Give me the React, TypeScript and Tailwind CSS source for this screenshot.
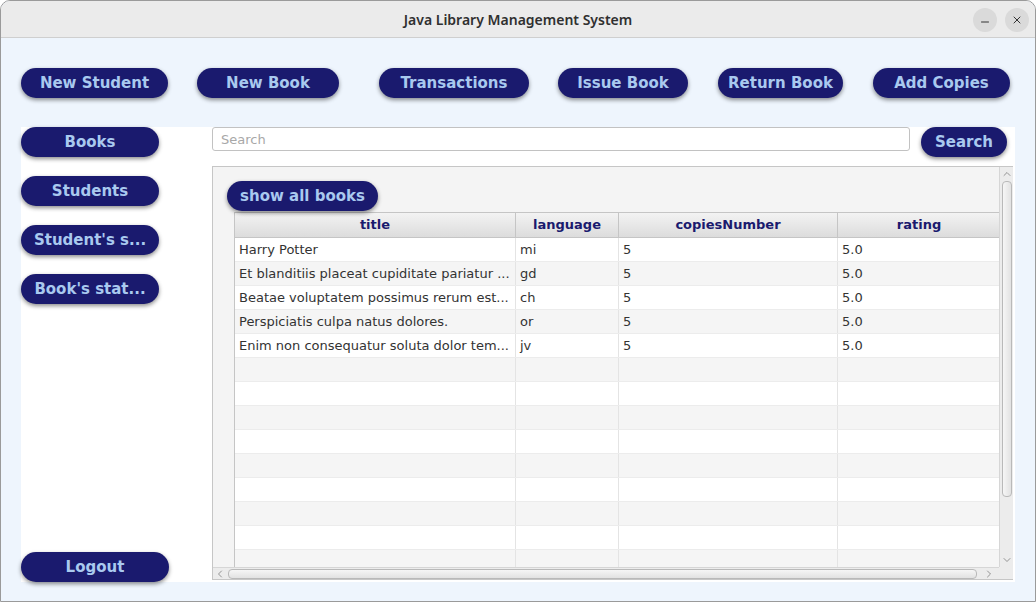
import { ChevronDown, ChevronLeft, ChevronRight, ChevronUp, Minus, X } from "lucide-react";

const books = [
  { title: "Harry Potter", language: "mi", copies: "5", rating: "5.0" },
  { title: "Et blanditiis placeat cupiditate pariatur ...", language: "gd", copies: "5", rating: "5.0" },
  { title: "Beatae voluptatem possimus rerum est...", language: "ch", copies: "5", rating: "5.0" },
  { title: "Perspiciatis culpa natus dolores.", language: "or", copies: "5", rating: "5.0" },
  { title: "Enim non consequatur soluta dolor tem...", language: "jv", copies: "5", rating: "5.0" },
];

const fx = "font-['DejaVu_Sans',sans-serif]";

function FxButton({ label, className = "" }: { label: string; className?: string }) {
  return (
    <button
      className={`h-[30px] shrink-0 rounded-full bg-[#1a1a6e] text-[15px] font-bold text-[#a9c9ef] shadow-[0_2px_4px_rgba(0,0,0,0.45)] ${fx} ${className}`}
    >
      {label}
    </button>
  );
}

export default function App() {
  const rows = Array.from({ length: 14 }, (_, i) => books[i]);

  return (
    <div className="w-[1036px] h-[602px] flex flex-col overflow-hidden rounded-t-[10px] border border-[#9a9a9a] bg-[#eef5fd]">
      {/* Title bar */}
      <div className="relative h-[37px] shrink-0 flex items-center justify-center bg-[#ebebeb] border-b border-[#cfcfcf]">
        <span className="text-[14px] font-semibold text-[#303030] font-['Noto_Sans',sans-serif]">
          Java Library Management System
        </span>
        <div className="absolute right-[6px] top-[7px] flex gap-[8px]">
          <div className="w-[24px] h-[24px] rounded-full bg-[#dadada] flex items-center justify-center">
            <Minus size={12} strokeWidth={2} className="text-[#333] mt-[4px]" />
          </div>
          <div className="w-[24px] h-[24px] rounded-full bg-[#dadada] flex items-center justify-center">
            <X size={12} strokeWidth={2} className="text-[#333]" />
          </div>
        </div>
      </div>

      {/* Top actions */}
      <div className="flex pl-[20px] pt-[30px]">
        <FxButton label="New Student" className="w-[147px]" />
        <FxButton label="New Book" className="w-[142px] ml-[29px]" />
        <FxButton label="Transactions" className="w-[150px] ml-[40px]" />
        <FxButton label="Issue Book" className="w-[130px] ml-[29px]" />
        <FxButton label="Return Book" className="w-[125px] ml-[30px]" />
        <FxButton label="Add Copies" className="w-[137px] ml-[30px]" />
      </div>

      {/* Main panel */}
      <div className="ml-[20px] mt-[29px] w-[994px] h-[455px] bg-white flex">
        {/* Sidebar */}
        <div className="w-[191px] flex flex-col">
          <div className="flex flex-col gap-[19px]">
            <FxButton label="Books" className="w-[138px]" />
            <FxButton label="Students" className="w-[138px]" />
            <FxButton label="Student's s..." className="w-[138px]" />
            <FxButton label="Book's stat..." className="w-[138px]" />
          </div>
          <div className="mt-auto">
            <FxButton label="Logout" className="w-[148px]" />
          </div>
        </div>

        {/* Content */}
        <div className="flex-1 flex flex-col">
          <div className="flex">
            <input
              placeholder="Search"
              className={`w-[698px] h-[24px] rounded-[3px] border border-[#c2c2c2] bg-white px-[8px] text-[13px] text-[#333] placeholder:text-[#a8a8a8] outline-none ${fx}`}
            />
            <FxButton label="Search" className="w-[86px] ml-[11px]" />
          </div>

          {/* Scroll pane */}
          <div className="mt-[9px] w-[801px] h-[414px] border border-[#c6c6c6] bg-[#f4f4f4] grid grid-cols-[786px_14px] grid-rows-[400px_12px]">
            <div className="overflow-hidden pl-[14px] pt-[14px]">
              <FxButton label="show all books" className="w-[151px] px-[10px]" />
              <div className={`ml-[7px] mt-[1px] w-[766px] bg-white border-l border-[#c5c5c5] ${fx} text-[13px]`}>
                <div className="flex h-[26px] bg-gradient-to-b from-[#f3f3f3] to-[#dcdcdc] border-y border-[#c5c5c5] font-bold text-[#1a1a6e]">
                  <div className="w-[281px] flex items-center justify-center border-r border-[#c5c5c5]">title</div>
                  <div className="w-[103px] flex items-center justify-center border-r border-[#c5c5c5]">language</div>
                  <div className="w-[219px] flex items-center justify-center border-r border-[#c5c5c5]">copiesNumber</div>
                  <div className="flex-1 flex items-center justify-center">rating</div>
                </div>
                {rows.map((b, i) => (
                  <div
                    key={i}
                    className={`flex h-[24px] border-b border-[#ececec] text-[#333] ${i % 2 === 1 ? "bg-[#f5f5f5]" : "bg-white"}`}
                  >
                    <div className="w-[281px] pl-[4px] flex items-center border-r border-[#e4e4e4] whitespace-nowrap overflow-hidden">{b?.title}</div>
                    <div className="w-[103px] pl-[4px] flex items-center border-r border-[#e4e4e4]">{b?.language}</div>
                    <div className="w-[219px] pl-[4px] flex items-center border-r border-[#e4e4e4]">{b?.copies}</div>
                    <div className="flex-1 pl-[4px] flex items-center">{b?.rating}</div>
                  </div>
                ))}
              </div>
            </div>

            {/* Vertical scrollbar */}
            <div className="flex flex-col items-center border-l border-[#d6d6d6] bg-[#ececec]">
              <ChevronUp size={12} strokeWidth={1.5} className="text-[#777] mt-[1px]" />
              <div className="mt-[1px] w-[10px] h-[316px] rounded-[4px] border border-[#b9b9b9] bg-gradient-to-r from-[#f6f6f6] to-[#e2e2e2]" />
              <ChevronDown size={12} strokeWidth={1.5} className="text-[#777] mt-auto mb-[1px]" />
            </div>

            {/* Horizontal scrollbar */}
            <div className="flex items-center border-t border-[#d6d6d6] bg-[#ececec]">
              <ChevronLeft size={12} strokeWidth={1.5} className="text-[#777] ml-[1px]" />
              <div className="ml-[2px] h-[10px] w-[749px] rounded-[4px] border border-[#b9b9b9] bg-gradient-to-b from-[#f6f6f6] to-[#e2e2e2]" />
              <ChevronRight size={12} strokeWidth={1.5} className="text-[#777] ml-auto mr-[4px]" />
            </div>
            <div className="bg-[#ececec]" />
          </div>
        </div>
      </div>
    </div>
  );
}
